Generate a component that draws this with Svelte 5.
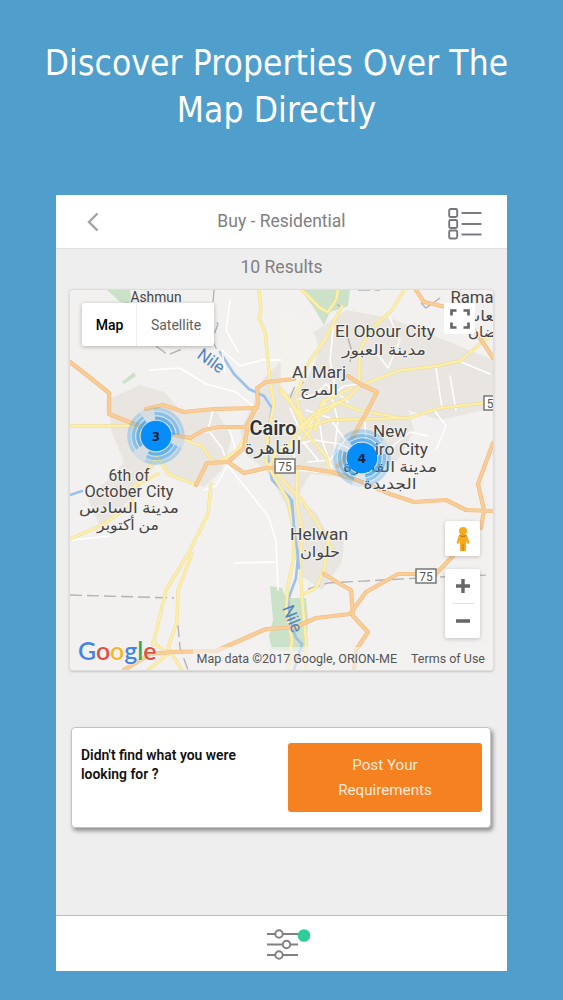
<script>
  let mapType = 'Map';

  const urban = [
    'M109 399 L140 385 L164 392 L184 414 L214 408 L232 437 L222 470 L204 487 L172 478 L158 462 L130 500 L100 527 L88 500 L124 462 L111 430 Z',
    'M262 380 L290 352 L310 335 L346 310 L390 318 L430 334 L493 360 L493 408 L440 420 L408 410 L414 430 L398 460 L350 478 L310 474 L296 500 L316 512 L330 540 L320 560 L296 545 L286 505 L266 470 L246 455 L240 430 L255 400 Z',
    'M300 530 L344 540 L342 562 L322 590 L300 575 Z'
  ];

  const parks = [
    'M107 290 L130 290 L132 304 L120 302 Z',
    'M301 290 L350 290 L348 306 L330 312 L324 325 L314 308 Z',
    'M270 586 L282 588 L286 598 L306 598 L308 620 L306 652 L272 650 L269 636 L273 620 Z',
    'M122 382 L134 372 L136 376 L124 384 Z'
  ];

  const streets = [
    'M150 370 L180 368 L206 384 L236 392 L258 410',
    'M213 410 L208 430 L222 448 L228 466 L246 488 L268 516 L276 540 L278 590',
    'M225 372 L222 350 L240 366 L262 360 L281 360',
    'M206 432 L228 426 L236 450 L216 486 L204 490',
    'M308 428 L326 400 L344 386 L360 384',
    'M306 410 L330 418 L345 440 L330 460 L308 462',
    'M284 448 L314 440 L340 444 L356 452',
    'M318 410 L322 440 L332 468',
    'M292 446 L297 470 L318 472',
    'M328 385 L338 420 L334 455',
    'M296 400 L316 394 L326 384 L348 402',
    'M390 318 L400 340 L388 368 L376 352',
    'M436 368 L442 408 M450 376 L456 410',
    'M461 362 L490 374 M434 410 L446 426 L436 450',
    'M276 420 L300 438 L318 460 M290 408 L300 430',
    'M230 300 L226 330 L238 352 M72 540 L110 536',
    'M364 412 L366 440 L390 448 L410 432 L428 436',
    'M334 320 L330 360 L336 392 M235 563 L276 562'
  ];

  const yellow = [
    'M259 290 L261 310 L259 318 L265 332 L270 380 L274 405 L268 432 L266 462 L276 480 L288 500 L293 528 L294 556 L288 585 L286 610 L292 640 L288 670',
    'M302 290 L320 308 L328 312 L336 300 L338 290',
    'M404 290 L392 310 L370 330 L360 350 L359 383',
    'M342 306 L326 338 L308 364 L296 395 L303 426',
    'M281 392 L312 428 L300 442 L278 448 L268 470',
    'M302 426 L350 396 L360 386 L397 371 L436 366 L460 361 L480 344 L493 334',
    'M303 428 L330 420 L408 418 L440 408 L493 402',
    'M303 428 L286 448 L272 456 M300 426 L312 440 L326 456 L330 474',
    'M302 424 L290 400 L280 388 M300 428 L316 412 L338 402 L358 410 L400 418',
    'M315 430 L322 402 L352 388',
    'M70 426 L136 426 L144 440 L157 456 L168 474 L194 484',
    'M158 456 L134 488 L132 504 L104 524 L70 539',
    'M134 486 L158 474 M185 440 L202 446 L214 464 L236 452 L248 432',
    'M211 484 L208 514 L188 554 L166 590 L153 645',
    'M192 554 L178 590 L177 622 L168 648 L182 670',
    'M153 642 L168 654 L148 670',
    'M270 464 L286 484 L302 500 L318 524 L332 550',
    'M297 470 L297 504 L302 530 L300 562 L302 598 L306 640 L306 670',
    'M324 570 L316 588 L304 594 M330 534 L324 570'
  ];

  const orange = [
    'M70 362 L88 376 L109 393 L109 414 L134 424 L160 432 L190 438 L204 430 L220 427 L246 427 L258 404 L257 388 L266 382 L294 379',
    'M146 409 L163 405 L184 412 L214 409 L257 408',
    'M196 485 L207 463 L228 462 L244 448 L248 424',
    'M228 462 L244 473 L266 468 L296 467 L332 472 L362 482 L390 494 L414 502 L446 500 L466 510 L493 511',
    'M493 443 L478 484 L484 510 L481 528',
    'M348 376 L360 384 L377 392 L368 410 L352 438 M338 466 L350 452',
    'M416 290 L424 302 L446 307 M474 330 L484 344 L493 358',
    'M124 670 L150 654 L172 652 L216 651 L266 629 L296 627 L316 618 L350 614 L366 592 L398 574 L414 574 L432 578 L453 556',
    'M324 574 L340 584 L351 590 L353 616 L368 632 L356 650 L354 670'
  ];

  const water = [
    'M220 352 L234 374 L249 389 L264 396 L272 408 L269 426 L268 456 L272 480 L290 498 L294 528 L298 556 L296 578 L288 600 L290 620 L296 638 L302 644 L294 670'
  ];

  const borders = [
    'M70 595 L174 598',
    'M178 625 L180 648 L188 670',
    'M156 346 L168 355 L182 349 L190 340',
    'M214 290 L212 316 L218 324 L212 340 L218 352',
    'M308 589 L328 583 L420 578 M440 577 L490 575',
    'M338 290 L334 302 L342 308 M421 303 L426 308 L440 298',
    'M348 338 L352 352 L350 362 M290 398 L294 388 L304 382',
    'M358 290 L380 290'
  ];

  // width is the drawn length of the line, so names keep their place on the map
  const places = [
    { text: 'Ashmun', x: 156, y: 302, width: 51, size: 13.8 },
    { text: 'El Obour City', x: 385, y: 337, width: 100, size: 16.5 },
    { text: 'مدينة العبور', x: 384, y: 355, width: 84, size: 15 },
    { text: 'Al Marj', x: 319, y: 378, width: 54, size: 16.5 },
    { text: 'المرج', x: 319, y: 395, width: 38, size: 15 },
    { text: 'Cairo', x: 273, y: 435, width: 47, size: 20, bold: true },
    { text: 'القاهرة', x: 273, y: 454, width: 57, size: 18 },
    { text: 'New', x: 390, y: 437, width: 34, size: 16.5 },
    { text: 'Cairo City', x: 391, y: 455, width: 74, size: 16.5 },
    { text: 'مدينة القاهرة', x: 390, y: 472, width: 94, size: 15 },
    { text: 'الجديدة', x: 390, y: 489, width: 53, size: 15 },
    { text: '6th of', x: 129, y: 481, width: 41, size: 16.5 },
    { text: 'October City', x: 129, y: 497, width: 89, size: 16.5 },
    { text: 'مدينة السادس', x: 129, y: 513, width: 100, size: 15 },
    { text: 'من أكتوبر', x: 128, y: 530, width: 62, size: 15 },
    { text: 'Helwan', x: 319, y: 540, width: 58, size: 16.5 },
    { text: 'حلوان', x: 320, y: 557, width: 40, size: 15 },
    { text: 'Rama', x: 472, y: 303, width: 43, size: 16.5 },
    { text: 'العاشر', x: 480, y: 321, width: 46, size: 15 },
    { text: 'رمضان', x: 490, y: 337, width: 44, size: 15 }
  ];

  const shields = [
    { text: '75', x: 285, y: 466 },
    { text: '75', x: 426, y: 576 },
    { text: '5', x: 494, y: 403 }
  ];

  const clusters = [
    { count: 3, x: 156, y: 436, turn: 25 },
    { count: 4, x: 362, y: 458, turn: -10 }
  ];
</script>

<div class="page">
  <h1>Discover Properties Over The<br>Map Directly</h1>

  <div class="phone">
    <header>
      <svg class="back" width="12" height="20" viewBox="0 0 12 20"><path d="M10.5 1.5 L2 10 L10.5 18.5"/></svg>
      <span class="title">Buy - Residential</span>
      <svg class="list" width="34" height="32" viewBox="0 0 34 32">
        {#each [1, 12, 22.5] as y}
          <rect x="1.2" y={y} width="8" height="8" rx="1.5"/>
          <path d="M13.5 {y + 4} H33.5"/>
        {/each}
      </svg>
    </header>

    <p class="results">10 Results</p>

    <div class="map">
      <svg class="canvas" viewBox="70 290 423 380" width="423" height="380">
        <rect class="land" x="70" y="290" width="423" height="380"/>
        {#each urban as d}<path class="urban" {d}/>{/each}
        <path class="desert" d="M280 318 C300 312 318 330 318 350 C314 374 300 392 281 396 Z"/>
        {#each parks as d}<path class="park" {d}/>{/each}
        {#each water as d}<path class="water" {d}/>{/each}
        {#each streets as d}<path class="street" {d}/>{/each}
        {#each borders as d}<path class="border" {d}/>{/each}
        {#each yellow as d}<path class="yellow-case" {d}/>{/each}
        {#each yellow as d}<path class="yellow" {d}/>{/each}
        {#each orange as d}<path class="orange-case" {d}/>{/each}
        {#each orange as d}<path class="orange" {d}/>{/each}
        <path class="water" d="M292 500 L294 528 M297 548 L299 568 M70 495 L76 493 L82 491"/>

        <text class="river" transform="translate(196 357) rotate(36)" textLength="29">Nile</text>
        <text class="river" transform="translate(282 608) rotate(68)" textLength="28">Nile</text>

        {#each shields as s}
          <rect class="shield" x={s.x - 10} y={s.y - 7} width="20" height="14"/>
          <text class="shield-text" x={s.text === '5' ? s.x - 4 : s.x} y={s.y + 4.5}>{s.text}</text>
        {/each}

        {#each places as p}
          <text class="place" class:bold={p.bold} x={p.x} y={p.y} font-size={p.size} textLength={p.width} lengthAdjust="spacingAndGlyphs">{p.text}</text>
        {/each}

        {#each clusters as c}
          <g transform="translate({c.x} {c.y})">
            <circle class="halo" r="29"/>
            <g transform="rotate({c.turn})">
              <circle class="ring r1" r="18"/>
              <circle class="ring r2" r="22.5"/>
              <circle class="ring r3" r="27"/>
            </g>
            <circle class="dot" r="15.3"/>
            <text class="count" y="4.5">{c.count}</text>
          </g>
        {/each}
      </svg>

      <div class="types">
        <button class:active={mapType === 'Map'} on:click={() => mapType = 'Map'}>Map</button>
        <button class:active={mapType === 'Satellite'} on:click={() => mapType = 'Satellite'}>Satellite</button>
      </div>

      <div class="control full">
        <svg width="20" height="20" viewBox="0 0 20 20"><path d="M1.5 6.5 V1.5 H6.5 M13.5 1.5 H18.5 V6.5 M18.5 13.5 V18.5 H13.5 M6.5 18.5 H1.5 V13.5"/></svg>
      </div>

      <div class="control pegman">
        <svg width="16" height="26" viewBox="0 0 16 26">
          <path fill="#f5a91b" d="M4 9 Q8 7 12 9 L14.5 17 L12.7 18 L11.3 15 L10.8 25 H5.2 L4.7 15 L3.3 18 L1.5 17 Z"/>
          <circle cx="8" cy="5" r="4" fill="#f5a91b"/>
          <path fill="#c77a14" d="M5 8.7 Q8 11 11 8.7 L10 11 H6 Z M7.5 18 H8.5 V25 H7.5 Z"/>
        </svg>
      </div>

      <div class="control zoom">
        <svg width="14" height="14" viewBox="0 0 14 14"><path d="M0 7 H14 M7 0 V14"/></svg>
        <hr>
        <svg width="14" height="14" viewBox="0 0 14 14"><path d="M0 7 H14"/></svg>
      </div>

      <div class="google"><b>G</b><b>o</b><b>o</b><b>g</b><b>l</b><b>e</b></div>
      <div class="legal"><span>Map data ©2017 Google, ORION-ME</span><span>Terms of Use</span></div>
    </div>

    <section class="ask">
      <p>Didn't find what you were looking for ?</p>
      <button>Post Your<br>Requirements</button>
    </section>

    <footer>
      <svg width="46" height="32" viewBox="0 0 46 32">
        <path d="M1 6 H36 M1 16.5 H32 M1 27 H32"/>
        <circle cx="13" cy="6" r="3.7"/>
        <circle cx="20.5" cy="16.5" r="3.7"/>
        <circle cx="13" cy="27" r="3.7"/>
        <circle class="badge" cx="38" cy="7.5" r="6.3"/>
      </svg>
    </footer>
  </div>
</div>

<style>
  :global(body) {
    background: #509ecb;
  }

  .page {
    height: 1000px;
    overflow: hidden;
    background: #509ecb;
    font-family: Roboto, "DejaVu Sans", sans-serif;
  }

  h1 {
    box-sizing: border-box;
    margin: 0;
    padding: 40px 0 0;
    height: 195px;
    width: 553px;
    font: 400 35px/47px "DejaVu Sans Condensed", "DejaVu Sans", sans-serif;
    font-stretch: condensed;
    letter-spacing: 0.12px;
    text-align: center;
    color: #fff;
    white-space: nowrap;
  }

  .phone {
    width: 451px;
    height: 776px;
    margin-left: 56px;
    background: #efeeef;
    display: flex;
    flex-direction: column;
  }

  header {
    box-sizing: border-box;
    height: 54px;
    background: #fff;
    border-bottom: 1px solid #e3e2e3;
    display: flex;
    align-items: center;
    justify-content: space-between;
    padding: 0 25px 0 31px;
  }

  header svg {
    fill: none;
    stroke: #a2a2a2;
    stroke-width: 2.4;
  }

  .list {
    margin-top: 4px;
  }

  header .list {
    stroke: #77757d;
    stroke-width: 1.9;
  }

  .title {
    font-size: 17.5px;
    color: #808080;
    margin: -2px 0 0 16px;
  }

  .results {
    margin: 0;
    height: 41px;
    line-height: 37px;
    font-size: 17.6px;
    text-align: center;
    color: #808080;
  }

  .map {
    position: relative;
    width: 423px;
    height: 380px;
    margin-left: 14px;
    border-radius: 2px;
    overflow: hidden;
    flex: none;
    outline: 1px solid #dedddb;
    box-shadow: 0 1px 3px #999;
  }

  .canvas {
    display: block;
  }

  .canvas path {
    fill: none;
    stroke-linejoin: round;
    stroke-linecap: round;
  }

  .land { fill: #f3f1ef; }
  .canvas .urban { fill: #e9e6e1; }
  .canvas .desert { fill: #f3f2ec; }
  .canvas .park { fill: #cce2c8; }
  .canvas .water { stroke: #9dc2ea; stroke-width: 2.6; }
  .canvas .street { stroke: #fff; stroke-width: 1.5; }
  .canvas .border { stroke: #b4b2b4; stroke-width: 1.4; stroke-dasharray: 12 5; stroke-linecap: butt; }
  .canvas .yellow-case { stroke: #efdf9c; stroke-width: 3.4; }
  .canvas .yellow { stroke: #fcefaa; stroke-width: 2.2; }
  .canvas .orange-case { stroke: #f2bd80; stroke-width: 4.2; }
  .canvas .orange { stroke: #f9cd98; stroke-width: 2.8; }

  .place {
    fill: #444;
    stroke: #f5f3f0;
    stroke-width: 2;
    stroke-linejoin: round;
    paint-order: stroke;
    text-anchor: middle;
  }

  .bold {
    font-weight: 600;
    fill: #333;
  }

  .river {
    font-size: 17px;
    fill: #5585bd;
  }

  .shield {
    fill: #fff;
    stroke: #777;
    stroke-width: 1.5;
  }

  .shield-text {
    font-size: 12px;
    fill: #555;
    text-anchor: middle;
  }

  .halo { fill: #1693f5; opacity: 0.1; }
  .dot { fill: #078dfa; }

  .ring {
    fill: none;
    stroke: #3ba2ef;
    stroke-width: 3.2;
  }

  .r1 { opacity: 0.75; stroke-dasharray: 28 9.7; }
  .r2 { opacity: 0.5; stroke-dasharray: 35 12.1; }
  .r3 { opacity: 0.22; stroke-dasharray: 42 14.5; }

  .count {
    font: bold 12px "DejaVu Sans", sans-serif;
    fill: #14233c;
    text-anchor: middle;
  }

  .types {
    position: absolute;
    left: 12px;
    top: 13px;
    display: flex;
    height: 43px;
    background: #fff;
    border-radius: 2px;
    box-shadow: 0 1px 4px #0004;
  }

  .types button {
    border: 0;
    padding: 0 0 0 1px;
    width: 77px;
    background: none;
    font: 14px Roboto, sans-serif;
    color: #606060;
  }

  .types button:first-child {
    width: 55px;
    border-right: 1px solid #eee;
  }

  .types .active {
    font-weight: 500;
    color: #000;
  }

  .control {
    position: absolute;
    right: 13px;
    width: 35px;
    background: #fff;
    border-radius: 2px;
    box-shadow: 0 1px 4px #0003;
    display: flex;
    flex-direction: column;
    align-items: center;
    justify-content: center;
  }

  .full {
    top: 13px;
    right: 18px;
    height: 31px;
    width: 31px;
    box-shadow: none;
  }

  .control path {
    stroke-width: 3.4;
  }

  .control.full path {
    stroke-width: 2.7;
  }

  .full path, .zoom path {
    fill: none;
    stroke: #666;
  }

  .pegman {
    top: 231px;
    height: 35px;
  }

  .zoom {
    top: 279px;
    height: 69px;
    justify-content: space-evenly;
  }

  .zoom hr {
    width: 22px;
    margin: 0;
    border: 0;
    border-top: 1px solid #e3e3e3;
  }

  .google {
    position: absolute;
    left: 8px;
    bottom: 5px;
    font: 24.8px/28px Lato, sans-serif;
    text-shadow: 0 0 2px #fff;
  }

  .google b { font-weight: 600; color: #4585e6; }
  .google b:nth-child(2), .google b:nth-child(6) { color: #e44d3f; }
  .google b:nth-child(3) { color: #f4b822; }
  .google b:nth-child(5) { color: #3aa757; }

  .legal {
    position: absolute;
    right: 0;
    bottom: 0;
    display: flex;
    gap: 14px;
    padding: 0 8px 0 4px;
    font-size: 12.5px;
    line-height: 23px;
    color: #555;
    background: #f5f4f299;
    white-space: nowrap;
  }

  .ask {
    box-sizing: border-box;
    width: 420px;
    height: 101px;
    margin: 57px 0 0 15px;
    flex: none;
    display: flex;
    justify-content: space-between;
    padding: 15px 8px 15px 9px;
    background: #fff;
    border: 1px solid #c4c3c4;
    border-radius: 4px;
    box-shadow: 2px 3px 4px #0006;
  }

  .ask p {
    margin: 3px 0 0;
    width: 165px;
    font-size: 13.9px;
    font-weight: 600;
    line-height: 19px;
    color: #111;
  }

  .ask button {
    width: 194px;
    height: 69px;
    padding: 0;
    border: 0;
    border-radius: 3px;
    background: #f68121;
    color: #fdebd9;
    font: 15.2px/25px Roboto, sans-serif;
  }

  footer {
    margin-top: auto;
    box-sizing: border-box;
    height: 56px;
    background: #fff;
    border-top: 1px solid #bdbcbd;
    padding: 12px 0 0 210px;
  }

  footer svg {
    display: block;
    fill: #fff;
    stroke: #808080;
    stroke-width: 2;
  }

  footer .badge {
    fill: #2dcc98;
    stroke: none;
  }
</style>
